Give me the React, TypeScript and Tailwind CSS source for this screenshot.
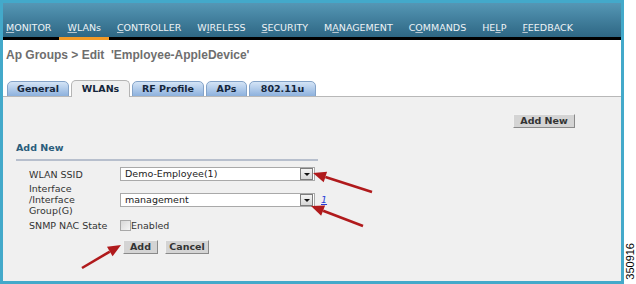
import React from "react";

const NAV = [
  { pre: "", u: "M", post: "ONITOR" },
  { pre: "", u: "W", post: "LANs", active: true },
  { pre: "", u: "C", post: "ONTROLLER" },
  { pre: "W", u: "I", post: "RELESS" },
  { pre: "", u: "S", post: "ECURITY" },
  { pre: "M", u: "A", post: "NAGEMENT" },
  { pre: "C", u: "O", post: "MMANDS" },
  { pre: "HE", u: "L", post: "P" },
  { pre: "", u: "F", post: "EEDBACK" },
];

const TABS = [
  { label: "General", w: "w-[62px]" },
  { label: "WLANs", w: "w-[59px]", active: true },
  { label: "RF Profile", w: "w-[72px]" },
  { label: "APs", w: "w-[41px]" },
  { label: "802.11u", w: "w-[67px]" },
];

const ARROWS: [number, number, number, number][] = [
  [372, 192, 313, 173],
  [363, 226, 311, 206],
  [82, 268, 121, 245],
];

function Arrow({ a }: { a: [number, number, number, number] }) {
  const [x1, y1, x2, y2] = a;
  const dx = x2 - x1;
  const dy = y2 - y1;
  const len = Math.hypot(dx, dy);
  const ux = dx / len;
  const uy = dy / len;
  const hl = 13;
  const hw = 5.5;
  const bx = x2 - ux * hl;
  const by = y2 - uy * hl;
  const pts = `${x2},${y2} ${bx - uy * hw},${by + ux * hw} ${bx + uy * hw},${by - ux * hw}`;
  return (
    <g>
      <line x1={x1} y1={y1} x2={bx} y2={by} stroke="#b01a1c" strokeWidth="2.6" />
      <polygon points={pts} fill="#b01a1c" />
    </g>
  );
}

function DropBtn() {
  return (
    <div className="w-[13px] h-[12px] border border-[#7d7d7d] bg-gradient-to-b from-[#f4f4f4] to-[#d6d6d6] flex items-end justify-center pb-[3px]">
      <svg width="6" height="3" viewBox="0 0 6 3">
        <polygon points="0,0 6,0 3,3" fill="#111" />
      </svg>
    </div>
  );
}

function Select({ value }: { value: string }) {
  return (
    <div className="w-[195px] h-[14px] bg-white border border-[#a9a9a9] flex items-center justify-between pl-[4px] pr-px">
      <span className="leading-[12px] text-[#222]">{value}</span>
      <DropBtn />
    </div>
  );
}

function Btn({ children, w }: { children: React.ReactNode; w: string }) {
  return (
    <div
      className={`${w} h-[14px] bg-[#d4d4d4] border border-t-[#f2f2f2] border-l-[#f2f2f2] border-r-[#8a8a8a] border-b-[#8a8a8a] flex items-center justify-center font-bold text-[#333] leading-[12px]`}
    >
      {children}
    </div>
  );
}

export default function App() {
  return (
    <div className="relative w-[636px] h-[284px] bg-white flex font-['DejaVu_Sans',sans-serif] text-[9.5px]">
      {/* ── Frame ── */}
      <div className="w-[624px] h-[284px] border-[3px] border-[#43a9ca] flex flex-col">
        {/* Header */}
        <div className="h-[37px] bg-gradient-to-b from-[#5597b5] to-[#2e6784] border-b-[3px] border-black flex items-end text-[#eef3f6] leading-[12px]">
          {NAV.map((n, i) => (
            <div
              key={i}
              className={`h-full flex items-end pb-[3px] ${i === 0 ? "pl-[3px] pr-2" : "px-2"} ${
                n.active ? "-mb-[3px] border-b-[3px] border-[#f29a26]" : ""
              }`}
            >
              <span>
                {n.pre}
                <span className="underline decoration-[#b8c8d2] underline-offset-[1px]">{n.u}</span>
                {n.post}
              </span>
            </div>
          ))}
        </div>

        {/* Title + tabs */}
        <div className="bg-white h-[56px] flex flex-col">
          <div className="pl-[3px] pt-[8px] font-['Liberation_Sans',Arial,sans-serif] font-bold text-[12px] leading-[14px] text-[#6e6e6e] whitespace-pre">
            {"Ap Groups > Edit  'Employee-AppleDevice'"}
          </div>
          <div className="mt-auto flex items-end gap-[2px] pl-[4px] -mb-px">
            {TABS.map((t) =>
              t.active ? (
                <div
                  key={t.label}
                  className={`${t.w} h-[17px] rounded-t-[5px] bg-[#f0f0f0] border border-b-0 border-[#b4b4b4] flex items-center justify-center font-bold text-[#15263b] leading-[12px] relative z-10`}
                >
                  {t.label}
                </div>
              ) : (
                <div
                  key={t.label}
                  className={`${t.w} h-[16px] rounded-t-[5px] bg-gradient-to-b from-[#d4e4f6] to-[#8db1dd] border border-[#84a3c8] flex items-center justify-center font-bold text-[#15263b] leading-[12px]`}
                >
                  {t.label}
                </div>
              )
            )}
          </div>
        </div>

        {/* Panel */}
        <div className="flex-1 bg-[#f0f0f0] border-t border-[#b8b8b8] flex flex-col text-[#333]">
          <div className="flex justify-end pr-[46px] mt-[17px]">
            <Btn w="w-[62px]">Add New</Btn>
          </div>
          <div className="ml-[13px] mt-[14px] font-bold text-[#2a5d7c] leading-[12px]">Add New</div>
          <div className="ml-[13px] mt-[5px] w-[302px] h-[2px] bg-[#b7bfcd]" />

          <div className="mt-[6px] ml-[26px] grid grid-cols-[91px_auto] gap-y-[2px] items-center leading-[11px]">
            <div>WLAN SSID</div>
            <Select value="Demo-Employee(1)" />

            <div className="h-[33px] flex flex-col justify-center">
              <div>Interface</div>
              <div>/Interface</div>
              <div>Group(G)</div>
            </div>
            <div className="flex items-center">
              <Select value="management" />
              <span className="ml-[6px] text-[#2a3fd8] italic underline">1</span>
            </div>

            <div className="h-[12px] flex items-center">SNMP NAC State</div>
            <div className="flex items-center">
              <div className="w-[11px] h-[11px] border border-[#a8a8a8] bg-gradient-to-br from-[#d8d8d8] to-[#f6f6f6]" />
              <span className="leading-[12px] mt-[2px]">Enabled</span>
            </div>
          </div>

          <div className="mt-[8px] ml-[120px] flex gap-[7px]">
            <Btn w="w-[35px]">Add</Btn>
            <Btn w="w-[44px]">Cancel</Btn>
          </div>
        </div>
      </div>

      {/* ── Right strip with figure number ── */}
      <div className="flex-1 flex flex-col justify-end items-center pb-[4px]">
        <span className="[writing-mode:vertical-rl] rotate-180 font-['Liberation_Sans',Arial,sans-serif] text-[11px] leading-[11px] text-black">
          350916
        </span>
      </div>

      <svg className="absolute inset-0 pointer-events-none" width="636" height="284">
        {ARROWS.map((a, i) => (
          <Arrow key={i} a={a} />
        ))}
      </svg>
    </div>
  );
}
